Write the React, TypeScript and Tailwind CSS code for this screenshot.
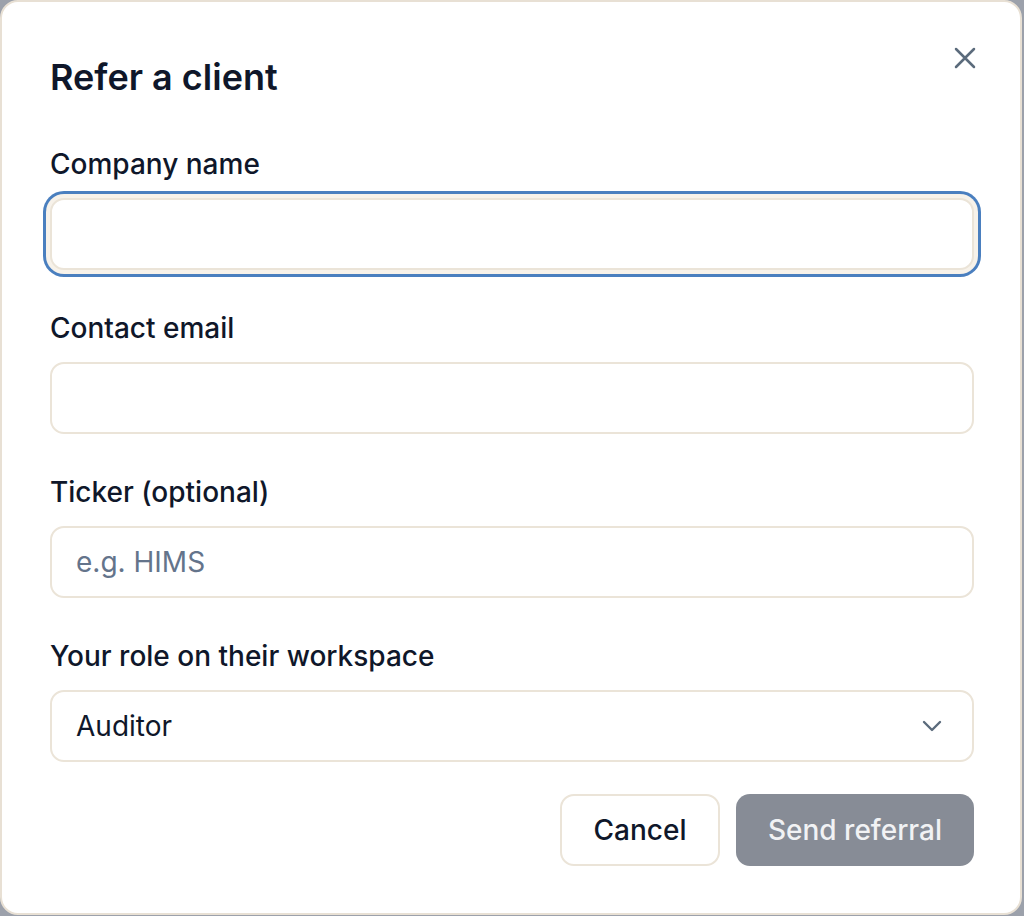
import React, { useState } from 'react';

const labelClass = 'block text-[28px] leading-[32px] font-[450] text-[#0f172a] mb-[18px]';
const inputClass =
  'block w-full h-[72px] rounded-[14px] border-2 border-[#ebe4d8] bg-white px-[24px] text-[28px] text-[#0f172a] placeholder:text-[#64748b] outline-none';

const App: React.FC = () => {
  const [company, setCompany] = useState('');
  const [email, setEmail] = useState('');
  const [ticker, setTicker] = useState('');
  const [role, setRole] = useState('Auditor');

  return (
    <div className="w-[1024px] h-[916px] bg-[#9ca1ab]" style={{ fontFamily: 'Inter, "Noto Sans", sans-serif' }}>
      <div className="relative w-[1022px] h-[915px] bg-white border-2 border-[#e8e0d4] rounded-[18px] pl-[48px] pr-[46px] pt-[48px] pb-[48px] flex flex-col">
        <button className="absolute top-[45px] right-[44px] text-[#5b6b7c]" aria-label="Close">
          <svg width="22" height="22" viewBox="0 0 22 22" fill="none" stroke="currentColor" strokeWidth="2.5" strokeLinecap="round">
            <path d="M2 2L20 20M20 2L2 20" />
          </svg>
        </button>

        <h2 className="text-[36px] leading-[54px] font-semibold text-[#0f172a]">Refer a client</h2>

        <div className="mt-[44px]">
          <label className={labelClass}>Company name</label>
          <input
            value={company}
            onChange={(e) => setCompany(e.target.value)}
            className={inputClass + ' shadow-[0_0_0_4px_#f7f2ea,0_0_0_7px_#4a7fbf]'}
          />
        </div>

        <div className="mt-[42px]">
          <label className={labelClass}>Contact email</label>
          <input value={email} onChange={(e) => setEmail(e.target.value)} className={inputClass} />
        </div>

        <div className="mt-[42px]">
          <label className={labelClass}>Ticker (optional)</label>
          <input
            value={ticker}
            onChange={(e) => setTicker(e.target.value)}
            placeholder="e.g. HIMS"
            className={inputClass}
          />
        </div>

        <div className="mt-[42px]">
          <label className={labelClass}>Your role on their workspace</label>
          <div className="relative">
            <select
              value={role}
              onChange={(e) => setRole(e.target.value)}
              className={inputClass + ' appearance-none'}
            >
              <option>Auditor</option>
              <option>Admin</option>
              <option>Viewer</option>
            </select>
            <svg
              className="absolute right-[32px] top-1/2 -translate-y-1/2 text-[#5b6b7c] pointer-events-none"
              width="20"
              height="12"
              viewBox="0 0 20 12"
              fill="none"
              stroke="currentColor"
              strokeWidth="2.4"
              strokeLinecap="round"
              strokeLinejoin="round"
            >
              <path d="M2 2L10 10L18 2" />
            </svg>
          </div>
        </div>

        <div className="mt-[32px] flex justify-end gap-[16px]">
          <button className="h-[72px] w-[160px] rounded-[14px] border-2 border-[#ebe4d8] bg-white text-[28px] font-[450] text-[#0f172a]">
            Cancel
          </button>
          <button
            disabled
            className="h-[72px] w-[238px] rounded-[14px] bg-[#878c96] text-[28px] font-[450] text-[#f1f2f4]"
          >
            Send referral
          </button>
        </div>
      </div>
    </div>
  );
};

export default App;
